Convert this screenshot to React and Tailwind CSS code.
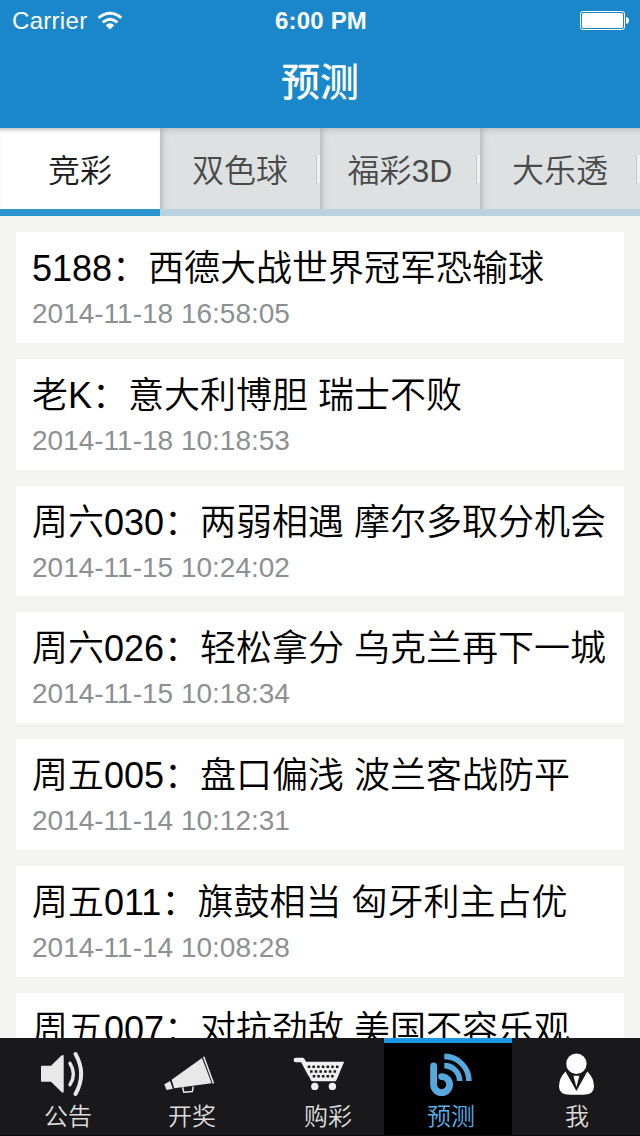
const categories = [
  { name: '竞彩', active: true },
  { name: '双色球' },
  { name: '福彩3D' },
  { name: '大乐透' },
];

const predictions = [
  { title: '5188：西德大战世界冠军恐输球', time: '2014-11-18 16:58:05' },
  { title: '老K：意大利博胆 瑞士不败', time: '2014-11-18 10:18:53' },
  { title: '周六030：两弱相遇 摩尔多取分机会', time: '2014-11-15 10:24:02' },
  { title: '周六026：轻松拿分 乌克兰再下一城', time: '2014-11-15 10:18:34' },
  { title: '周五005：盘口偏浅 波兰客战防平', time: '2014-11-14 10:12:31' },
  { title: '周五011：旗鼓相当 匈牙利主占优', time: '2014-11-14 10:08:28' },
  { title: '周五007：对抗劲敌 美国不容乐观' },
];

const SpeakerIcon = () => (
  <svg viewBox="0 0 128 64" className="w-32 h-16" fill="#e8e8e8">
    <path d="M42 27.7H51L61.5 17.6Q63.7 16 63.7 18V53.5Q63.7 55.5 61.5 54L51 43.7H42Q41 43.7 41 42.7V28.7Q41 27.7 42 27.7Z" />
    <path d="M70 25.3Q76.8 36 70 46.7" fill="none" stroke="#e8e8e8" strokeWidth="3.4" strokeLinecap="round" />
    <path d="M75.5 16Q86.8 36 75.5 56" fill="none" stroke="#e8e8e8" strokeWidth="4" strokeLinecap="round" />
  </svg>
);

const MegaphoneIcon = () => (
  <svg viewBox="0 0 128 64" className="w-32 h-16" fill="#e8e8e8">
    <path d="M43.6 41.8L74 20L83.6 45.3L46.3 50.3Z" />
    <path d="M36.3 46.3L42 43L44.9 50.8L38.5 52Z" />
    <path d="M75.7 18.7L85.5 45.5" stroke="#e8e8e8" strokeWidth="1.6" />
    <path d="M54.6 49.3L55.8 54.3L64.3 53.6L65.3 48.5" fill="none" stroke="#e8e8e8" strokeWidth="1.5" strokeLinejoin="round" />
  </svg>
);

const cartHoles = [
  [53, 28.7], [57.7, 28.7], [62.4, 28.7], [67.1, 28.7], [71.8, 28.7], [76.5, 28.7], [81.2, 28.7],
  [55.3, 33.5], [60, 33.5], [64.7, 33.5], [69.4, 33.5], [74.1, 33.5], [78.8, 33.5],
  [58, 38.3], [62.6, 38.3], [67.2, 38.3], [71.8, 38.3], [76.4, 38.3],
];

const CartIcon = () => (
  <svg viewBox="0 0 128 64" className="w-32 h-16" fill="#f0f0f0">
    <path d="M39.9 22H46.5L54 36" fill="none" stroke="#f0f0f0" strokeWidth="4.6" strokeLinecap="round" strokeLinejoin="round" />
    <path d="M47 23.8H88.2L80.5 42Q80 43.2 79 43.2H56.5Q55.3 43.2 54.7 42Z" />
    <circle cx="58.8" cy="48.4" r="3.7" />
    <circle cx="76.4" cy="48.4" r="3.7" />
    {cartHoles.map(([x, y]) => (
      <rect key={`${x}-${y}`} x={x - 1.3} y={y - 1.3} width="2.6" height="2.6" rx="0.5" fill="#19191b" />
    ))}
  </svg>
);

const BlogIcon = () => (
  <svg viewBox="0 0 128 64" className="w-32 h-16" fill="none" stroke="#56a9dd">
    <path d="M49.6 28V46.6A8 8 0 1 0 57.6 38.6" strokeWidth="6.8" strokeLinecap="round" />
    <path d="M60.3 27.6A15.4 15.4 0 0 1 75.7 43" strokeWidth="5.6" />
    <path d="M60.3 18.4A24.6 24.6 0 0 1 84.9 43" strokeWidth="5.6" />
  </svg>
);

const PersonIcon = () => (
  <svg viewBox="0 0 128 64" className="w-32 h-16" fill="#fff">
    <circle cx="64.4" cy="25.8" r="10.2" />
    <path d="M53.5 33.5L64.4 53L75.3 33.5Q82 40 82 48.5Q82 56.8 71 56.8H58Q47 56.8 47 48.5Q47 40 53.5 33.5Z" />
    <path d="M61.4 37.8H67.4L64.4 49Z" />
  </svg>
);

const navItems = [
  { label: '公告', Icon: SpeakerIcon, shift: 'pl-2' },
  { label: '开奖', Icon: MegaphoneIcon, shift: '' },
  { label: '购彩', Icon: CartIcon, shift: 'pl-4' },
  { label: '预测', Icon: BlogIcon, shift: 'pl-1.5', active: true },
  { label: '我', Icon: PersonIcon, shift: 'pl-0.5' },
];

const StatusBar = () => (
  <div className="grid grid-cols-3 items-center h-[42px] pl-3 pr-2.5 text-2xl leading-10 text-white">
    <div className="flex items-center gap-2.5">
      <span className="tracking-[0.3px]">Carrier</span>
      <svg viewBox="0 0 26 20" className="w-[26px] h-5" fill="none" stroke="#fff" strokeWidth="3">
        <path d="M1.7 6.8Q13 -2.4 24.3 6.8" />
        <path d="M5.7 11.4Q13 5.2 20.3 11.4" />
        <path d="M8.7 14.2Q13 10.4 17.3 14.2L13 18.6Z" fill="#fff" stroke="none" />
      </svg>
    </div>
    <span className="text-center font-bold tracking-[0.2px]">6:00 PM</span>
    <svg viewBox="0 0 50 20" className="w-[50px] h-5 justify-self-end">
      <rect x="0.5" y="0.5" width="44" height="18" rx="2.5" fill="none" stroke="#fff" />
      <rect x="2" y="2" width="41" height="15" rx="1.5" fill="#fff" />
      <path d="M46 6Q49 6.5 49 9.5T46 13Z" fill="#fff" />
    </svg>
  </div>
);

const CategoryTab = ({ name, active }) => (
  <div
    className={
      active
        ? 'flex items-center w-40 h-full bg-white border-b-[7px] border-[#2b94d0] text-[#1d1d1d] shadow-[inset_0_5px_5px_-4px_rgba(0,0,0,0.35)]'
        : 'flex items-center w-40 h-full bg-[#dde1e2] border-b-[7px] border-[#bad1de] text-[#4a4a4a] shadow-[inset_7px_6px_8px_-7px_rgba(0,0,0,0.3)]'
    }
  >
    <span className="flex-1 text-center text-[32px] leading-10 pt-1">{name}</span>
    {!active && <i className="w-1 h-7 -ml-1 border-l border-[#c3c7c8] bg-[#eff1f1]" />}
  </div>
);

const PredictionCard = ({ title, time }) => (
  <div className="shrink-0 h-[110.8px] bg-white px-4 pt-[13px]">
    <h2 className="text-4xl leading-12 text-black whitespace-nowrap">{title}</h2>
    <p className="text-[28px] leading-[42px] text-[#8b9092]">{time}</p>
  </div>
);

const NavItem = ({ label, Icon, shift, active }) => (
  <div className={active ? 'w-32 h-full bg-black text-[#56b0ea]' : 'w-32 h-full text-[#dcdcdc]'}>
    <div className={active ? 'h-16 shadow-[inset_0_5px_0_#1b96e4]' : 'h-16'}>
      <Icon />
    </div>
    <div className={`text-2xl leading-[30px] text-center ${shift}`}>{label}</div>
  </div>
);

export default function App() {
  return (
    <div className="flex flex-col w-[640px] h-[1136px] overflow-hidden bg-[#f3f3f2] font-[350] font-['Liberation_Sans','Noto_Sans_CJK_SC',sans-serif]">
      <header className="shrink-0 h-32 bg-[#1987ca]">
        <StatusBar />
        <h1 className="text-center text-white text-[39px] leading-[82px] font-medium">预测</h1>
      </header>
      <nav className="shrink-0 flex h-22">
        {categories.map((category) => (
          <CategoryTab key={category.name} {...category} />
        ))}
      </nav>
      <main className="flex-1 min-h-0 flex flex-col gap-4 px-4 pt-4 overflow-hidden">
        {predictions.map((item) => (
          <PredictionCard key={item.title} {...item} />
        ))}
      </main>
      <footer className="shrink-0 flex h-[98px] bg-[#19191b] border-b border-[#0c0c0d]">
        {navItems.map((item) => (
          <NavItem key={item.label} {...item} />
        ))}
      </footer>
    </div>
  );
}
